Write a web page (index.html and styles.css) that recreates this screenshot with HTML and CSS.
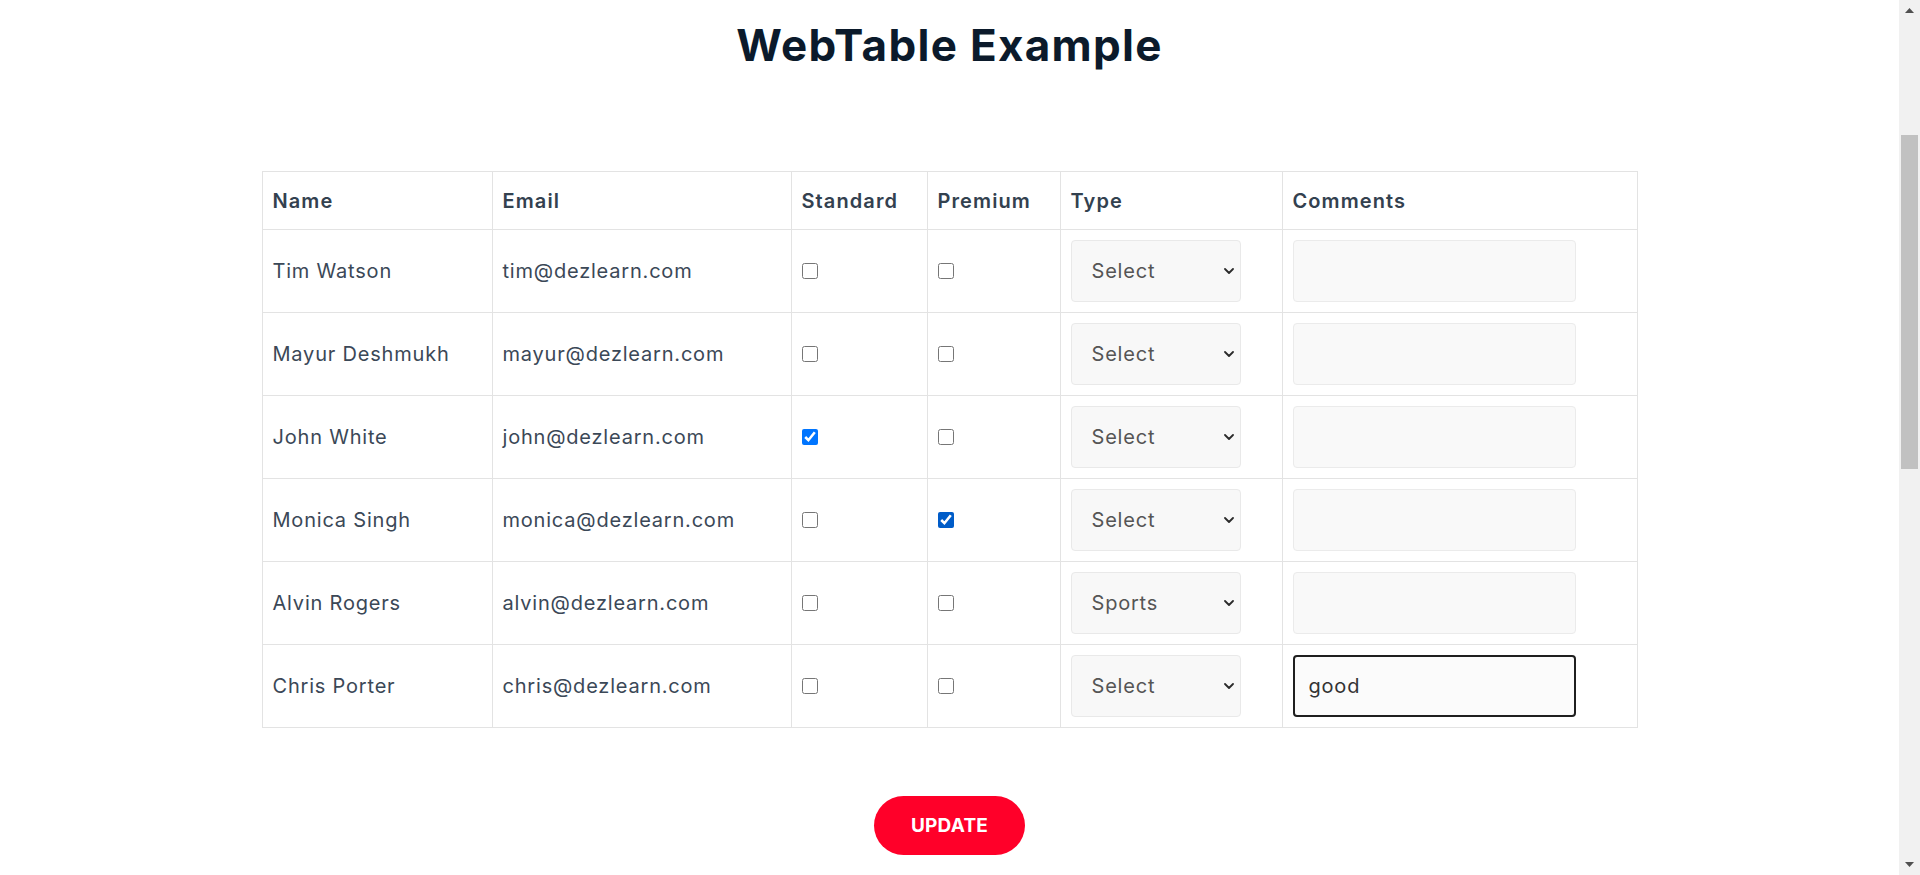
FILE: index.html
```html
<!DOCTYPE html>
<html lang="en">
<head>
<meta charset="utf-8">
<title>WebTable Example</title>
<link rel="stylesheet" href="styles.css">
</head>
<body>
<div class="viewport">
  <main class="page">
    <h1 class="page-title">WebTable Example</h1>
    <table class="web-table">
      <colgroup>
        <col class="col-name">
        <col class="col-email">
        <col class="col-standard">
        <col class="col-premium">
        <col class="col-type">
        <col class="col-comments">
      </colgroup>
      <thead>
        <tr>
          <th>Name</th>
          <th>Email</th>
          <th>Standard</th>
          <th>Premium</th>
          <th>Type</th>
          <th>Comments</th>
        </tr>
      </thead>
      <tbody>
        <tr>
          <td>Tim Watson</td>
          <td>tim@dezlearn.com</td>
          <td><input type="checkbox" class="check"></td>
          <td><input type="checkbox" class="check"></td>
          <td><div class="select-wrap"><select class="type-select"><option selected>Select</option><option>Sports</option><option>Music</option><option>Movies</option></select><svg class="chevron" viewBox="0 0 10 6"><path d="M1 1l4 4 4-4" fill="none" stroke="#2b2b2b" stroke-width="1.8" stroke-linecap="round" stroke-linejoin="round"/></svg></div></td>
          <td><input type="text" class="comment-input"></td>
        </tr>
        <tr>
          <td>Mayur Deshmukh</td>
          <td>mayur@dezlearn.com</td>
          <td><input type="checkbox" class="check"></td>
          <td><input type="checkbox" class="check"></td>
          <td><div class="select-wrap"><select class="type-select"><option selected>Select</option><option>Sports</option><option>Music</option><option>Movies</option></select><svg class="chevron" viewBox="0 0 10 6"><path d="M1 1l4 4 4-4" fill="none" stroke="#2b2b2b" stroke-width="1.8" stroke-linecap="round" stroke-linejoin="round"/></svg></div></td>
          <td><input type="text" class="comment-input"></td>
        </tr>
        <tr>
          <td>John White</td>
          <td>john@dezlearn.com</td>
          <td><input type="checkbox" class="check" checked></td>
          <td><input type="checkbox" class="check"></td>
          <td><div class="select-wrap"><select class="type-select"><option selected>Select</option><option>Sports</option><option>Music</option><option>Movies</option></select><svg class="chevron" viewBox="0 0 10 6"><path d="M1 1l4 4 4-4" fill="none" stroke="#2b2b2b" stroke-width="1.8" stroke-linecap="round" stroke-linejoin="round"/></svg></div></td>
          <td><input type="text" class="comment-input"></td>
        </tr>
        <tr>
          <td>Monica Singh</td>
          <td>monica@dezlearn.com</td>
          <td><input type="checkbox" class="check"></td>
          <td><input type="checkbox" class="check check-hover" checked></td>
          <td><div class="select-wrap"><select class="type-select"><option selected>Select</option><option>Sports</option><option>Music</option><option>Movies</option></select><svg class="chevron" viewBox="0 0 10 6"><path d="M1 1l4 4 4-4" fill="none" stroke="#2b2b2b" stroke-width="1.8" stroke-linecap="round" stroke-linejoin="round"/></svg></div></td>
          <td><input type="text" class="comment-input"></td>
        </tr>
        <tr>
          <td>Alvin Rogers</td>
          <td>alvin@dezlearn.com</td>
          <td><input type="checkbox" class="check"></td>
          <td><input type="checkbox" class="check"></td>
          <td><div class="select-wrap"><select class="type-select"><option>Select</option><option selected>Sports</option><option>Music</option><option>Movies</option></select><svg class="chevron" viewBox="0 0 10 6"><path d="M1 1l4 4 4-4" fill="none" stroke="#2b2b2b" stroke-width="1.8" stroke-linecap="round" stroke-linejoin="round"/></svg></div></td>
          <td><input type="text" class="comment-input"></td>
        </tr>
        <tr>
          <td>Chris Porter</td>
          <td>chris@dezlearn.com</td>
          <td><input type="checkbox" class="check"></td>
          <td><input type="checkbox" class="check"></td>
          <td><div class="select-wrap"><select class="type-select"><option selected>Select</option><option>Sports</option><option>Music</option><option>Movies</option></select><svg class="chevron" viewBox="0 0 10 6"><path d="M1 1l4 4 4-4" fill="none" stroke="#2b2b2b" stroke-width="1.8" stroke-linecap="round" stroke-linejoin="round"/></svg></div></td>
          <td><input type="text" class="comment-input is-active" value="good"></td>
        </tr>
      </tbody>
    </table>
    <div class="actions">
      <button type="button" class="update-btn">UPDATE</button>
    </div>
  </main>
  <aside class="scrollbar" aria-hidden="true">
    <div class="sb-btn"><svg class="sb-arrow" viewBox="0 0 9 5"><polygon points="0,5 4.5,0 9,5" fill="#505050"/></svg></div>
    <div class="sb-track"><div class="sb-thumb"></div></div>
    <div class="sb-btn"><svg class="sb-arrow" viewBox="0 0 9 5"><polygon points="0,0 9,0 4.5,5" fill="#505050"/></svg></div>
  </aside>
</div>
<script src="script.js"></script>
</body>
</html>
```

FILE: styles.css
```css
html, body {
  margin: 0;
  padding: 0;
  background: #ffffff;
}

body {
  font-family: Inter, "Noto Sans", "DejaVu Sans", sans-serif;
  overflow: hidden;
}

.viewport {
  display: flex;
  height: 875px;
}

.page {
  flex: 1;
  min-width: 0;
  overflow: hidden;
}

.page-title {
  margin: 18px 0 0;
  text-align: center;
  font-family: Inter, "Noto Sans", sans-serif;
  font-weight: 700;
  font-size: 44px;
  line-height: 54px;
  color: #0b1a2b;
  letter-spacing: 1.3px;
}

.web-table {
  margin: 99px auto 0;
  width: 1375px;
  border-collapse: collapse;
  table-layout: fixed;
}

.col-name { width: 230px; }
.col-email { width: 299px; }
.col-standard { width: 136px; }
.col-premium { width: 133px; }
.col-type { width: 222px; }
.col-comments { width: 355px; }

.web-table th,
.web-table td {
  border: 1px solid #e3e3e3;
  padding: 10px;
  text-align: left;
  vertical-align: middle;
  font-size: 20px;
  line-height: 30px;
  letter-spacing: 0.8px;
  color: #3b4857;
  white-space: nowrap;
}

.web-table th {
  font-weight: 600;
  padding: 14px 10px 13px;
  letter-spacing: 1.1px;
  color: #33414f;
}

.check {
  display: block;
  width: 16px;
  height: 16px;
  margin: 0;
}

.check-hover {
  accent-color: #005cc8;
}

.select-wrap {
  position: relative;
  width: 170px;
}

.type-select {
  display: block;
  appearance: none;
  -webkit-appearance: none;
  box-sizing: border-box;
  width: 170px;
  height: 62px;
  margin: 0;
  padding: 0 34px 0 20px;
  background: #f8f8f8;
  border: 1px solid #e9e9e9;
  border-radius: 4px;
  font-family: Inter, "Noto Sans", sans-serif;
  font-size: 20px;
  letter-spacing: 0.8px;
  color: #555555;
  outline: none;
}

.chevron {
  position: absolute;
  right: 7px;
  top: 50%;
  width: 10px;
  height: 6px;
  margin-top: -3px;
  pointer-events: none;
}

.comment-input {
  display: block;
  box-sizing: border-box;
  width: 283px;
  height: 62px;
  margin: 0;
  padding: 0 15px;
  background: #f9f9f9;
  border: 1px solid #ebebeb;
  border-radius: 4px;
  font-family: Inter, "Noto Sans", sans-serif;
  font-size: 20px;
  letter-spacing: 0.8px;
  color: #333333;
  caret-color: #111111;
}

.comment-input:focus {
  outline: none;
}

.comment-input.is-active {
  border: 2px solid #1f1f1f;
  padding: 0 14px;
  background: #fbfbfb;
}

.actions {
  display: flex;
  justify-content: center;
  margin-top: 68px;
}

.update-btn {
  width: 151px;
  height: 59px;
  border: none;
  border-radius: 30px;
  background: #ff0029;
  color: #ffffff;
  font-family: Inter, "Noto Sans", sans-serif;
  font-weight: 700;
  font-size: 19px;
  letter-spacing: 0.2px;
  cursor: pointer;
}

.scrollbar {
  flex: none;
  width: 21px;
  height: 875px;
  background: #f1f1f1;
  display: flex;
  flex-direction: column;
}

.sb-btn {
  flex: none;
  height: 21px;
  display: flex;
  align-items: center;
  justify-content: center;
}

.sb-arrow {
  width: 9px;
  height: 5px;
}

.sb-track {
  flex: 1;
  padding: 0 2px;
}

.sb-thumb {
  margin-top: 114px;
  height: 334px;
  background: #c1c1c1;
}
```

FILE: script.js
```js
var active = document.querySelector('.comment-input.is-active');
if (active) {
  active.focus();
  var end = active.value.length;
  active.setSelectionRange(end, end);
}
```
